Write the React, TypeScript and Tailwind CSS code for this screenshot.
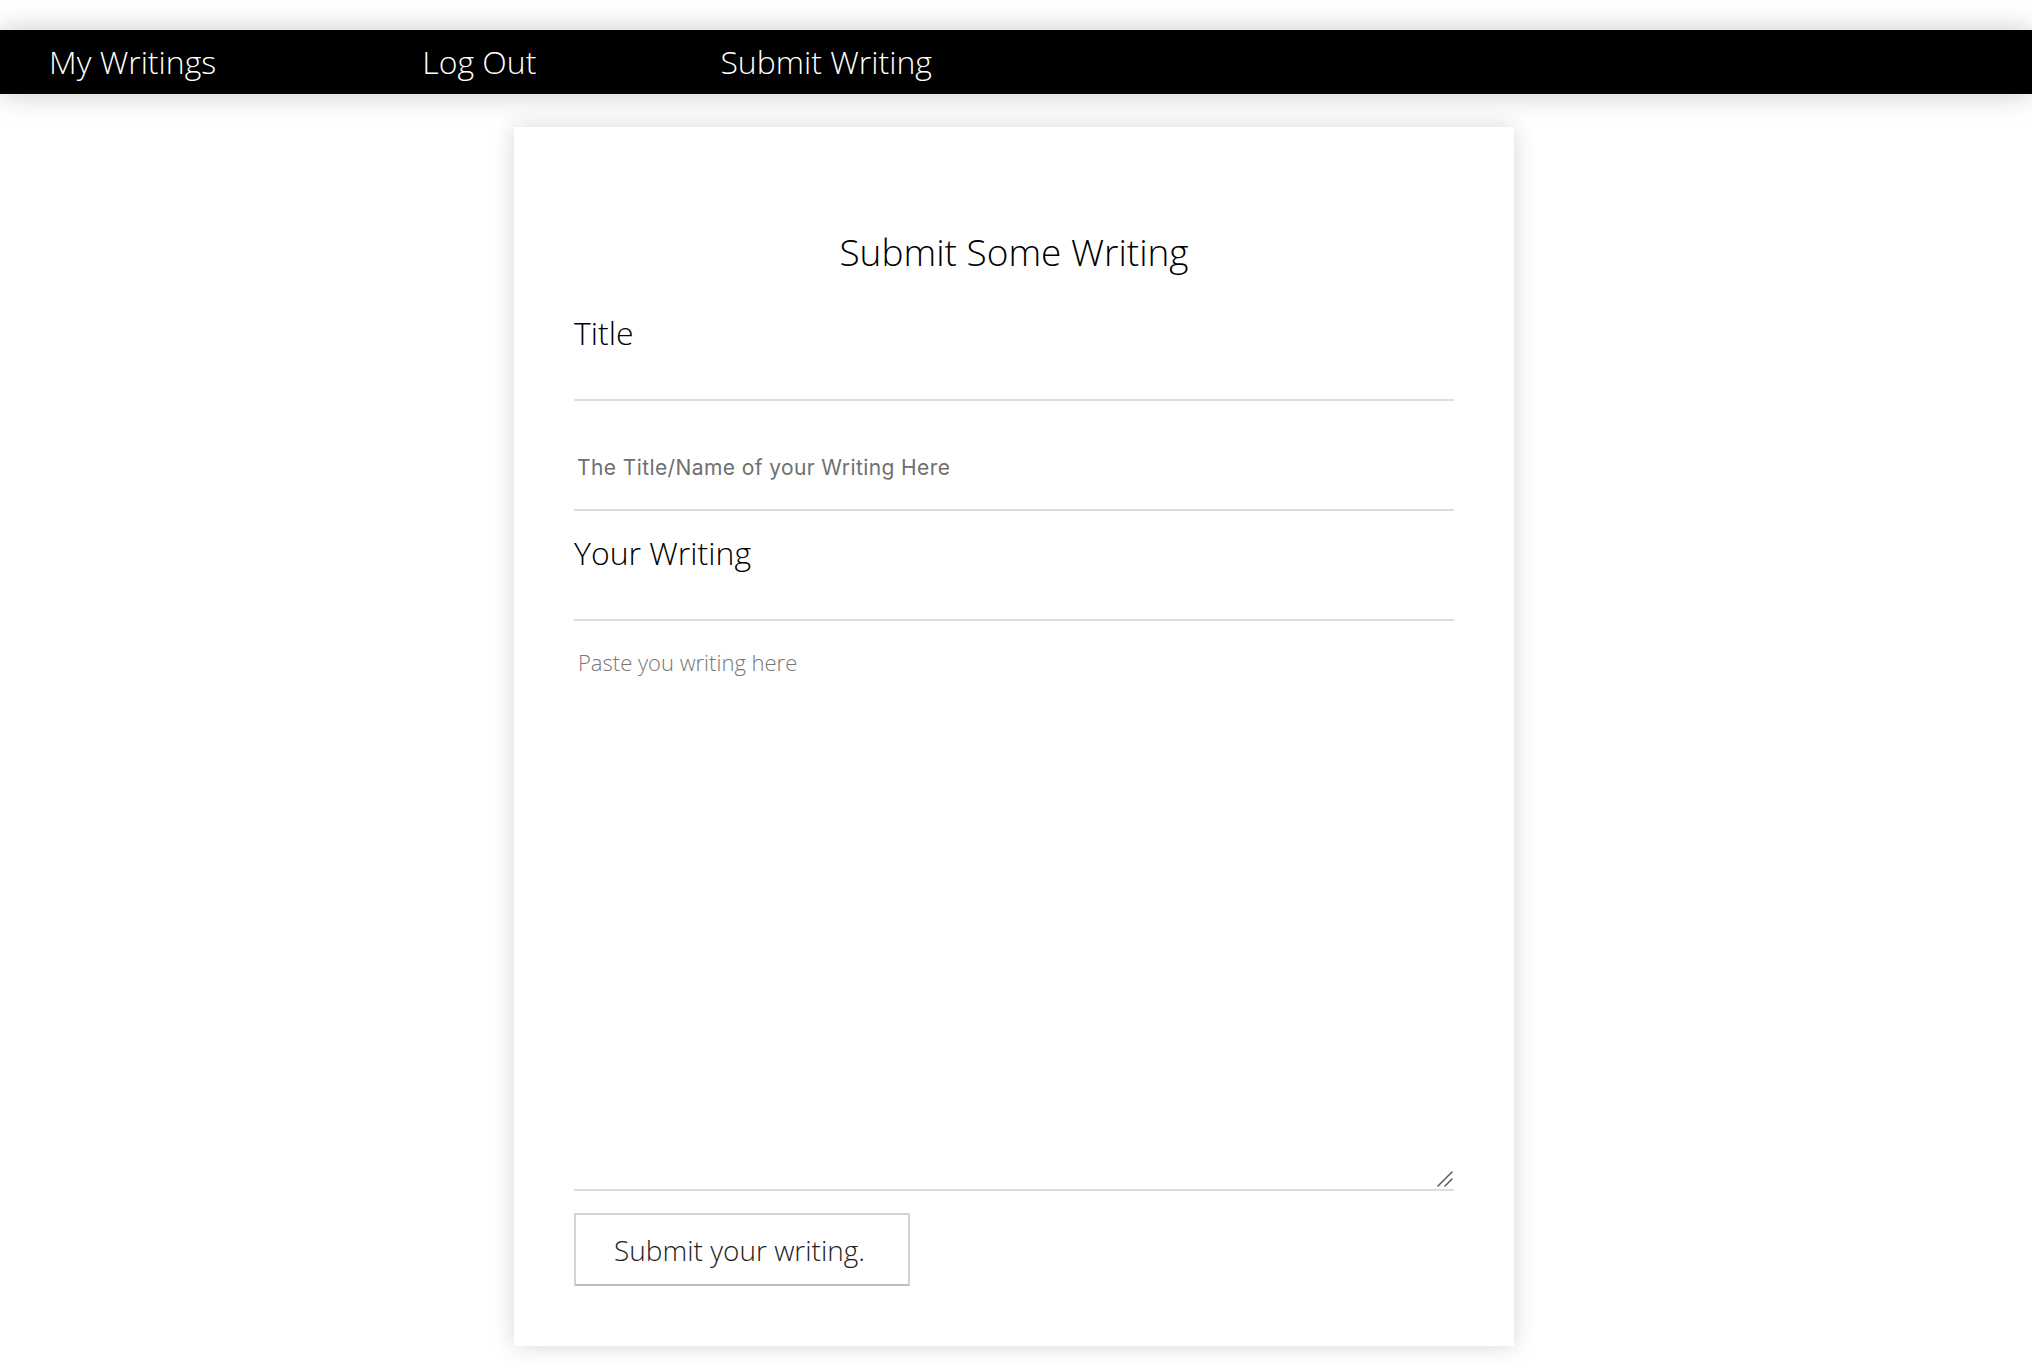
import React from "react";

const NavLink = ({ label, className }: { label: string; className: string }) => (
  <a href="#" className={`text-white no-underline ${className}`}>
    {label}
  </a>
);

const App = () => {
  return (
    <div className="min-h-screen bg-white font-['Open_Sans',sans-serif] font-light text-black">
      <div className="pt-[30px]">
        <nav className="h-[64px] bg-black flex items-center text-[32px] shadow-[0_0_28px_rgba(0,0,0,0.22)]">
          <NavLink label="My Writings" className="ml-[49px]" />
          <NavLink label="Log Out" className="ml-[206px]" />
          <NavLink label="Submit Writing" className="ml-[184px]" />
        </nav>
      </div>

      <main className="flex justify-center pt-[33px] pr-[4px]">
        <form
          className="w-[1000px] bg-white px-[60px] pt-[101px] pb-[60px] shadow-[0_0_22px_rgba(0,0,0,0.16)]"
          onSubmit={(e) => e.preventDefault()}
        >
          <h1 className="text-center text-[37px] leading-[48px] font-light">Submit Some Writing</h1>

          <label className="block mt-[15px] h-[110px] pt-[22px] border-b-2 border-[#dddddd] text-[32px] leading-[40px]">
            Title
          </label>
          <input
            type="text"
            placeholder="The Title/Name of your Writing Here"
            className="block w-full h-[110px] pt-[24px] px-[3px] border-b-2 border-[#dddddd] font-['Inter',sans-serif] font-normal text-[21px] tracking-[0.4px] placeholder:text-[#6f6f6f] outline-none"
          />

          <label className="block h-[110px] pt-[22px] border-b-2 border-[#dddddd] text-[32px] leading-[40px]">
            Your Writing
          </label>
          <div className="relative">
            <textarea
              placeholder="Paste you writing here"
              className="block w-full h-[570px] pt-[25px] px-[4px] border-b-2 border-[#dddddd] text-[22px] leading-[32px] placeholder:text-[#767676] outline-none resize-none"
            />
            <svg
              className="absolute right-[1px] bottom-[4px] w-[16px] h-[16px] pointer-events-none"
              viewBox="0 0 16 16"
              fill="none"
              stroke="#5f5f5f"
              strokeWidth="1.6"
              strokeLinecap="round"
            >
              <path d="M15 1L1 15" />
              <path d="M15 8L8 15" />
            </svg>
          </div>

          <button
            type="submit"
            className="mt-[22px] w-[336px] h-[73px] pl-[38px] text-left text-[28px] text-[#222222] border-2 border-[#d4d4d4] border-b-[#bdbdbd] bg-white"
          >
            Submit your writing.
          </button>
        </form>
      </main>
    </div>
  );
};

export default App;
